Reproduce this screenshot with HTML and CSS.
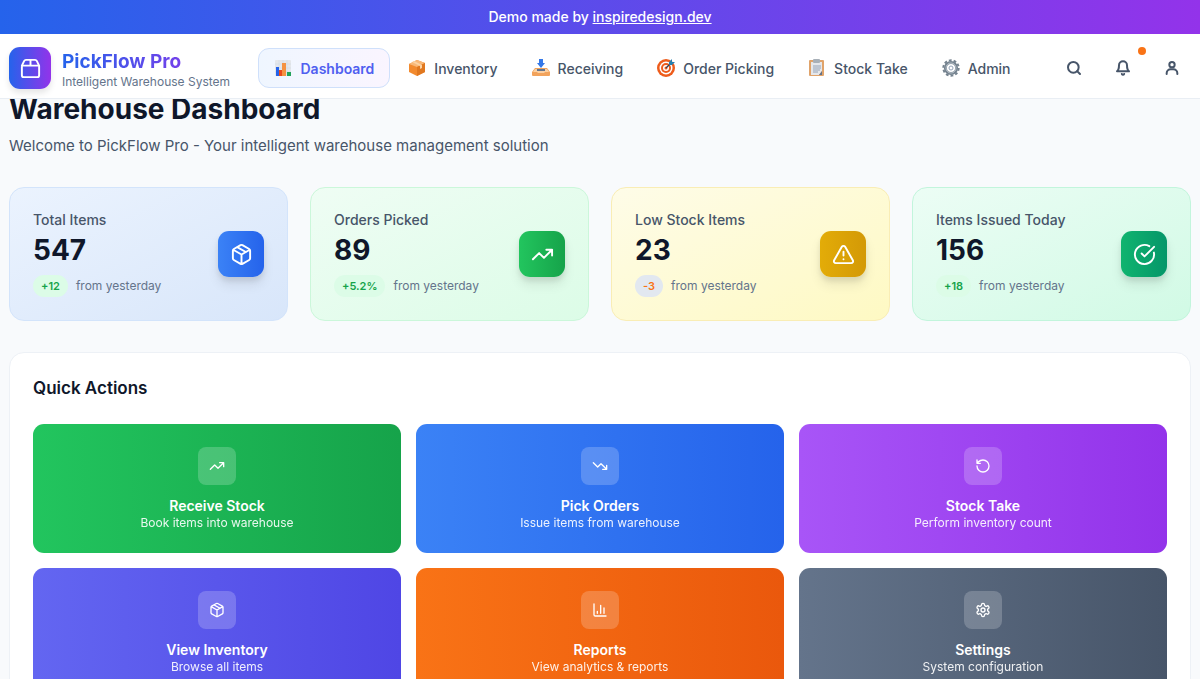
FILE: index.html
```html
<!DOCTYPE html>
<html lang="en">
<head>
    <meta charset="UTF-8">
    <meta name="viewport" content="width=device-width, initial-scale=1.0">
    <title>PickFlow Pro</title>
    <link rel="stylesheet" href="styles.css">
</head>
<body>
<!-- Shared line icons -->
<svg class="sprite" aria-hidden="true">
    <symbol id="i-package" viewBox="0 0 24 24"><path d="m7.5 4.27 9 5.15M21 8a2 2 0 0 0-1-1.73l-7-4a2 2 0 0 0-2 0l-7 4A2 2 0 0 0 3 8v8a2 2 0 0 0 1 1.73l7 4a2 2 0 0 0 2 0l7-4A2 2 0 0 0 21 16ZM3.3 7l8.7 5 8.7-5M12 22V12"/></symbol>
    <symbol id="i-up" viewBox="0 0 24 24"><path d="m22 7-8.5 8.5-5-5L2 17M16 7h6v6"/></symbol>
    <symbol id="i-down" viewBox="0 0 24 24"><path d="m22 17-8.5-8.5-5 5L2 7M16 17h6v-6"/></symbol>
    <symbol id="i-alert" viewBox="0 0 24 24"><path d="m21.73 18-8-14a2 2 0 0 0-3.48 0l-8 14A2 2 0 0 0 4 21h16a2 2 0 0 0 1.73-3ZM12 9v4M12 17h.01"/></symbol>
    <symbol id="i-check" viewBox="0 0 24 24"><path d="M21.8 10A10 10 0 1 1 17 3.34M9 11l3 3L22 4"/></symbol>
    <symbol id="i-rotate" viewBox="0 0 24 24"><path d="M3 12a9 9 0 1 0 9-9 9.75 9.75 0 0 0-6.74 2.74L3 8M3 3v5h5"/></symbol>
    <symbol id="i-chart" viewBox="0 0 24 24"><path d="M3 3v16a2 2 0 0 0 2 2h16M18 17V9M13 17V5M8 17v-3"/></symbol>
    <symbol id="i-settings" viewBox="0 0 24 24"><path d="M12.22 2h-.44a2 2 0 0 0-2 2v.18a2 2 0 0 1-1 1.73l-.43.25a2 2 0 0 1-2 0l-.15-.08a2 2 0 0 0-2.73.73l-.22.38a2 2 0 0 0 .73 2.73l.15.1a2 2 0 0 1 1 1.72v.51a2 2 0 0 1-1 1.74l-.15.09a2 2 0 0 0-.73 2.73l.22.38a2 2 0 0 0 2.73.73l.15-.08a2 2 0 0 1 2 0l.43.25a2 2 0 0 1 1 1.73V20a2 2 0 0 0 2 2h.44a2 2 0 0 0 2-2v-.18a2 2 0 0 1 1-1.73l.43-.25a2 2 0 0 1 2 0l.15.08a2 2 0 0 0 2.73-.73l.22-.39a2 2 0 0 0-.73-2.73l-.15-.08a2 2 0 0 1-1-1.74v-.5a2 2 0 0 1 1-1.74l.15-.09a2 2 0 0 0 .73-2.73l-.22-.38a2 2 0 0 0-2.73-.73l-.15.08a2 2 0 0 1-2 0l-.43-.25a2 2 0 0 1-1-1.73V4a2 2 0 0 0-2-2z"/><circle cx="12" cy="12" r="3"/></symbol>
    <symbol id="i-search" viewBox="0 0 24 24"><circle cx="11" cy="11" r="8"/><path d="m21 21-4.3-4.3"/></symbol>
    <symbol id="i-bell" viewBox="0 0 24 24"><path d="M6 8a6 6 0 0 1 12 0c0 7 3 9 3 9H3s3-2 3-9M10.3 21a1.94 1.94 0 0 0 3.4 0"/></symbol>
    <symbol id="i-user" viewBox="0 0 24 24"><circle cx="12" cy="7" r="4"/><path d="M20 21v-1a6 6 0 0 0-6-6h-4a6 6 0 0 0-6 6v1"/></symbol>
    <symbol id="i-box" viewBox="0 0 24 24"><path d="M3 9h18v10a2 2 0 0 1-2 2H5a2 2 0 0 1-2-2ZM3 9l2.450-4.900A2 2 0 0 1 7.240 3h9.520a2 2 0 0 1 1.800 1.100L21 9M12 3v6"/></symbol>
</svg>

<div class="banner">Demo made by <a href="#">inspiredesign.dev</a></div>

<header class="header">
    <a class="brand" href="#">
        <span class="brand-logo"><svg class="icon"><use href="#i-box"/></svg></span>
        <span class="brand-text">
            <span class="brand-name">PickFlow Pro</span>
            <span class="brand-tagline">Intelligent Warehouse System</span>
        </span>
    </a>

    <nav class="nav">
        <a class="nav-item active" href="#">
            <svg class="nav-icon" viewBox="0 0 18 18">
                <rect x="1" y="1" width="16" height="16" rx="1" fill="#e5e7eb"/>
                <path d="M1 5h16M1 9h16M1 13h16M5 1v16M9 1v16M13 1v16" stroke="#cbd5e1" stroke-width=".5"/>
                <rect x="2" y="8" width="3" height="9" fill="#2563eb"/>
                <rect x="5" y="11" width="3" height="6" fill="#ea4a1c"/>
                <rect x="8" y="4" width="4" height="13" fill="#f59342"/>
                <rect x="13" y="13" width="4" height="4" fill="#22a35a"/>
            </svg>
            Dashboard
        </a>
        <a class="nav-item" href="#">
            <svg class="nav-icon" viewBox="0 0 18 18">
                <path d="m1 5 8-4 8 3v9l-8 4-8-4Z" fill="#f28a2e"/>
                <path d="m1 5 8-4 8 3-8 4Z" fill="#f8b878"/>
                <path d="m9 8 8-4v9l-8 4Z" fill="#e07820"/>
                <path d="m4 3 8 4v3l2-1V6L6 2Z" fill="#fbd3a4"/>
            </svg>
            Inventory
        </a>
        <a class="nav-item" href="#">
            <svg class="nav-icon" viewBox="0 0 18 18">
                <path d="M3 9h12l3 4v3a1 1 0 0 1-1 1H1a1 1 0 0 1-1-1v-3Z" fill="#f2a35c"/>
                <path d="M3 10h12l2 3h-4l-1 1H6l-1-1H1Z" fill="#fbd0a2"/>
                <path d="M5 10h8v2H5Z" fill="#64748b"/>
                <path d="M7 0h4v4h2L9 9 5 4h2Z" fill="#3478e8"/>
            </svg>
            Receiving
        </a>
        <a class="nav-item" href="#">
            <svg class="nav-icon" viewBox="0 0 18 18">
                <circle cx="9" cy="9" r="9" fill="#ee5c1b"/>
                <circle cx="9" cy="9" r="6.500" fill="#fff"/>
                <circle cx="9" cy="9" r="5" fill="#ee5c1b"/>
                <circle cx="9" cy="9" r="3" fill="#fff"/>
                <circle cx="9" cy="9" r="1.500" fill="#ee5c1b"/>
                <path d="m9 9 5-5" stroke="#334155" stroke-width="1.200"/>
                <path d="m12 3 3-3v3h3l-3 3h-3Z" fill="#2680b0"/>
            </svg>
            Order Picking
        </a>
        <a class="nav-item" href="#">
            <svg class="nav-icon" viewBox="0 0 18 18">
                <rect x="1" y="1" width="15" height="16" rx="1" fill="#e0a36a"/>
                <path d="M3 3h11v9l-3 4H3Z" fill="#e5e7eb"/>
                <path d="M5 7h8M5 9h8M5 11h7M5 13h5" stroke="#94a3b8"/>
                <rect x="5" y="0" width="7" height="4" rx="1" fill="#a8b0b8"/>
                <path d="m11 16 3-4v4Z" fill="#64748b"/>
            </svg>
            Stock Take
        </a>
        <a class="nav-item" href="#">
            <svg class="nav-icon" viewBox="0 0 18 18">
                <circle cx="9" cy="9" r="7.700" fill="none" stroke="#75838f" stroke-width="2" stroke-dasharray="2.800 2.040"/>
                <circle cx="9" cy="9" r="5.600" fill="none" stroke="#75838f" stroke-width="3"/>
                <circle cx="9" cy="9" r="5" fill="none" stroke="#b8c2cb" stroke-width="1"/>
                <circle cx="9" cy="9" r="2" fill="none" stroke="#94a3b8" stroke-width="1"/>
            </svg>
            Admin
        </a>
    </nav>

    <div class="tools">
        <button class="tool" type="button" aria-label="Search"><svg class="icon"><use href="#i-search"/></svg></button>
        <button class="tool" type="button" aria-label="Notifications"><svg class="icon"><use href="#i-bell"/></svg><span class="dot"></span></button>
        <button class="tool" type="button" aria-label="Account"><svg class="icon"><use href="#i-user"/></svg></button>
    </div>
</header>

<main class="main">
    <h1>Warehouse Dashboard</h1>
    <p class="welcome">Welcome to PickFlow Pro - Your intelligent warehouse management solution</p>

    <section class="stats">
        <div class="stat stat-blue">
            <div>
                <div class="stat-label">Total Items</div>
                <div class="stat-value">547</div>
                <div class="stat-change"><span class="badge">+12</span> from yesterday</div>
            </div>
            <div class="stat-icon"><svg class="icon"><use href="#i-package"/></svg></div>
        </div>
        <div class="stat stat-green">
            <div>
                <div class="stat-label">Orders Picked</div>
                <div class="stat-value">89</div>
                <div class="stat-change"><span class="badge">+5.2%</span> from yesterday</div>
            </div>
            <div class="stat-icon"><svg class="icon"><use href="#i-up"/></svg></div>
        </div>
        <div class="stat stat-yellow">
            <div>
                <div class="stat-label">Low Stock Items</div>
                <div class="stat-value">23</div>
                <div class="stat-change"><span class="badge badge-down">-3</span> from yesterday</div>
            </div>
            <div class="stat-icon"><svg class="icon"><use href="#i-alert"/></svg></div>
        </div>
        <div class="stat stat-emerald">
            <div>
                <div class="stat-label">Items Issued Today</div>
                <div class="stat-value">156</div>
                <div class="stat-change"><span class="badge">+18</span> from yesterday</div>
            </div>
            <div class="stat-icon"><svg class="icon"><use href="#i-check"/></svg></div>
        </div>
    </section>

    <section class="panel">
        <h2>Quick Actions</h2>
        <div class="actions">
            <button class="action action-green" type="button">
                <span class="action-icon"><svg class="icon"><use href="#i-up"/></svg></span>
                <span class="action-title">Receive Stock</span>
                <span class="action-text">Book items into warehouse</span>
            </button>
            <button class="action action-blue" type="button">
                <span class="action-icon"><svg class="icon"><use href="#i-down"/></svg></span>
                <span class="action-title">Pick Orders</span>
                <span class="action-text">Issue items from warehouse</span>
            </button>
            <button class="action action-purple" type="button">
                <span class="action-icon"><svg class="icon"><use href="#i-rotate"/></svg></span>
                <span class="action-title">Stock Take</span>
                <span class="action-text">Perform inventory count</span>
            </button>
            <button class="action action-indigo" type="button">
                <span class="action-icon"><svg class="icon"><use href="#i-package"/></svg></span>
                <span class="action-title">View Inventory</span>
                <span class="action-text">Browse all items</span>
            </button>
            <button class="action action-orange" type="button">
                <span class="action-icon"><svg class="icon"><use href="#i-chart"/></svg></span>
                <span class="action-title">Reports</span>
                <span class="action-text">View analytics &amp; reports</span>
            </button>
            <button class="action action-slate" type="button">
                <span class="action-icon"><svg class="icon"><use href="#i-settings"/></svg></span>
                <span class="action-title">Settings</span>
                <span class="action-text">System configuration</span>
            </button>
        </div>
    </section>
</main>
</body>
</html>
```
FILE: styles.css
```css
* {
    box-sizing: border-box;
}

body {
    margin: 0;
    font-family: Inter, "Liberation Sans", sans-serif;
    font-size: 14px;
    background-color: #f8fafc;
    color: #0f172a;
}

a {
    color: inherit;
    text-decoration: none;
}

button {
    font-family: inherit;
    border: none;
    cursor: pointer;
}

.sprite {
    display: none;
}

.icon {
    width: 16px;
    height: 16px;
    fill: none;
    stroke: currentColor;
    stroke-width: 2;
    stroke-linecap: round;
    stroke-linejoin: round;
}

.banner {
    padding: 8px;
    line-height: 18px;
    text-align: center;
    font-weight: 500;
    color: white;
    background: linear-gradient(to right, #2563eb, #9333ea);
}

.banner a {
    text-decoration: underline;
}

/* Header */
.header {
    position: sticky;
    top: 0;
    z-index: 10;
    display: flex;
    align-items: center;
    justify-content: space-between;
    height: 65px;
    padding: 4px 9px 0;
    background-color: white;
    border-bottom: 1px solid #e9eef4;
}

.brand {
    display: flex;
    align-items: center;
    gap: 11px;
}

.brand-logo {
    display: flex;
    align-items: center;
    justify-content: center;
    width: 42px;
    height: 42px;
    border-radius: 11px;
    color: white;
    background: linear-gradient(to right, #2563eb, #9333ea);
    box-shadow: 0 4px 6px rgba(0, 0, 0, 0.1);
}

.brand-logo .icon {
    width: 23px;
    height: 23px;
}

.brand-text {
    display: flex;
    flex-direction: column;
    padding-top: 3px;
}

.brand-name {
    font-size: 19px;
    line-height: 24px;
    font-weight: 700;
    color: transparent;
    background: linear-gradient(to right, #2563eb, #9333ea);
    background-clip: text;
}

.brand-tagline {
    font-size: 12px;
    line-height: 16px;
    color: #64748b;
}

.nav {
    display: flex;
    gap: 2px;
}

.nav-item {
    display: flex;
    align-items: center;
    gap: 8px;
    height: 40px;
    padding: 0 15px;
    border: 1px solid transparent;
    border-radius: 11px;
    font-weight: 500;
    color: #475569;
}

.nav-item.active {
    font-weight: 600;
    color: #4f5ff0;
    border-color: #cfe0fb;
    background: linear-gradient(to right, #eff6ff, #faf5ff);
}

.nav-icon {
    width: 18px;
    height: 18px;
}

.tools {
    display: flex;
    gap: 11px;
}

.tool {
    position: relative;
    display: flex;
    align-items: center;
    justify-content: center;
    width: 38px;
    height: 38px;
    padding: 0;
    border-radius: 11px;
    color: #475569;
    background: none;
}

.tool .icon {
    stroke-width: 3;
}

.dot {
    position: absolute;
    top: -2px;
    right: -4px;
    width: 8px;
    height: 8px;
    border-radius: 50%;
    background-color: #f97316;
}

/* Dashboard */
.main {
    padding: 0 9px 30px;
}

h1 {
    margin: 0;
    font-size: 28px;
    line-height: 20px;
    font-weight: 700;
}

.welcome {
    margin: 15px 0 30px;
    font-size: 15px;
    line-height: 23px;
    color: #475569;
}

.stats {
    display: grid;
    grid-template-columns: repeat(4, 1fr);
    gap: 22px;
    margin-bottom: 31px;
}

.stat {
    display: flex;
    align-items: center;
    justify-content: space-between;
    padding: 23px;
    border: 1px solid;
    border-radius: 15px;
}

.stat-label {
    line-height: 18px;
    font-weight: 500;
    color: #475569;
}

.stat-value {
    margin: 4px 0 8px;
    font-size: 28px;
    line-height: 34px;
    font-weight: 700;
}

.stat-change {
    display: flex;
    align-items: center;
    gap: 8px;
    font-size: 12px;
    line-height: 22px;
    color: #64748b;
}

.badge {
    padding: 0 8px;
    border-radius: 11px;
    font-size: 11px;
    font-weight: 600;
    color: #16a34a;
    background-color: #dcfce7;
}

.badge-down {
    color: #f97316;
    background-color: #e2e8f0;
}

.stat-icon {
    display: flex;
    align-items: center;
    justify-content: center;
    width: 46px;
    height: 46px;
    border-radius: 11px;
    color: white;
    box-shadow: 0 8px 12px rgba(0, 0, 0, 0.08), 0 4px 5px rgba(0, 0, 0, 0.08);
}

.stat-icon .icon {
    width: 23px;
    height: 23px;
}

.stat-blue {
    background: linear-gradient(to bottom right, #ebf3fe, #d8e6fa);
    border-color: #d3e4fb;
}

.stat-blue .stat-icon {
    background: linear-gradient(to right, #3b82f6, #2563eb);
}

.stat-green {
    background: linear-gradient(to bottom right, #effdf4, #dcfce7);
    border-color: #cbf7da;
}

.stat-green .stat-icon {
    background: linear-gradient(to right, #22c55e, #16a34a);
}

.stat-yellow {
    background: linear-gradient(to bottom right, #fefce8, #fef9c3);
    border-color: #f9edb5;
}

.stat-yellow .stat-icon {
    background: linear-gradient(to right, #e3ac08, #d39906);
}

.stat-emerald {
    background: linear-gradient(to bottom right, #ecfdf5, #d1fae5);
    border-color: #c2f5dc;
}

.stat-emerald .stat-icon {
    background: linear-gradient(to right, #10b46f, #059669);
}

/* Quick actions */
.panel {
    padding: 23px;
    border: 1px solid #edf1f6;
    border-radius: 15px;
    background-color: white;
}

h2 {
    margin: 0 0 24px;
    font-size: 17px;
    line-height: 24px;
    font-weight: 600;
}

.actions {
    display: grid;
    grid-template-columns: repeat(3, 1fr);
    gap: 15px;
}

.action {
    display: flex;
    flex-direction: column;
    align-items: center;
    padding: 23px;
    border-radius: 11px;
    color: white;
}

.action-icon {
    display: flex;
    align-items: center;
    justify-content: center;
    width: 38px;
    height: 38px;
    margin-bottom: 12px;
    border-radius: 8px;
    background-color: rgba(255, 255, 255, 0.2);
}

.action-title {
    font-size: 14px;
    line-height: 18px;
    font-weight: 600;
}

.action-text {
    font-size: 12px;
    line-height: 15px;
    opacity: 0.9;
}

.action-green {
    background: linear-gradient(to right, #22c55e, #16a34a);
}

.action-blue {
    background: linear-gradient(to right, #3b82f6, #2563eb);
}

.action-purple {
    background: linear-gradient(to right, #a855f7, #9333ea);
}

.action-indigo {
    background: linear-gradient(to right, #6366f1, #4f46e5);
}

.action-orange {
    background: linear-gradient(to right, #f97316, #ea580c);
}

.action-slate {
    background: linear-gradient(to right, #64748b, #475569);
}
```
